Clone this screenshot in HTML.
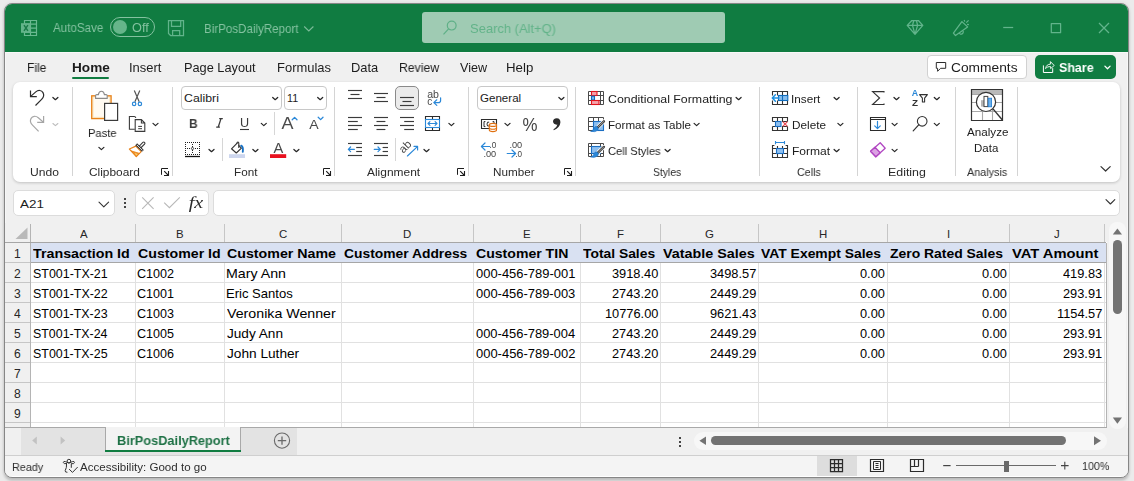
<!DOCTYPE html>
<html><head><meta charset="utf-8"><title>Excel</title>
<style>
html,body{margin:0;padding:0;}
body{width:1134px;height:481px;overflow:hidden;background:#ebebeb;position:relative;font-family:"Liberation Sans",sans-serif;}
.b{position:absolute;}
.t{position:absolute;white-space:nowrap;line-height:normal;transform-origin:0 0;}
.g{will-change:transform;}
svg{position:absolute;left:0;top:0;overflow:visible;}
</style></head><body>
<div class="b" style="left:4px;top:3px;width:1125px;height:475px;box-sizing:border-box;border:1px solid #868686;border-radius:8px;background:#f0f0f0;box-shadow:0 3px 3px 0 rgba(0,0,0,.17), 0 0 3px 1px rgba(0,0,0,.05);"></div>
<div class="b" style="left:5px;top:4px;width:1123px;height:48px;background:#107c41;border-radius:7px 7px 0 0;"></div>
<div class="b" style="left:422px;top:12px;width:303px;height:31px;background:#9fcbb3;border-radius:3px;"></div>
<div class="b" style="left:110px;top:17px;width:45px;height:20px;border:1px solid #84c2a0;box-sizing:border-box;border-radius:10px;"></div>
<div class="b" style="left:113px;top:20px;width:14px;height:14px;background:#66b58a;border-radius:7px;"></div>
<div class="b" style="left:5px;top:52px;width:1123px;height:1px;background:#f8f8f8;"></div>
<div class="b" style="left:5px;top:53px;width:1px;height:417px;background:#f7f7f7;"></div>
<div class="b" style="left:1127px;top:53px;width:1px;height:417px;background:#f7f7f7;"></div>
<div class="b" style="left:72px;top:77px;width:37px;height:2px;background:#107c41;border-radius:1px;"></div>
<div class="b" style="left:927px;top:55px;width:100px;height:24px;background:#ffffff;border:1px solid #d1d1d1;box-sizing:border-box;border-radius:4px;"></div>
<div class="b" style="left:1035px;top:55px;width:81px;height:24px;background:#107c41;border-radius:5px;"></div>
<div class="b" style="left:13px;top:82px;width:1107px;height:99.5px;background:#ffffff;border-radius:7px;box-shadow:0 1px 3px rgba(0,0,0,.2);"></div>
<div class="b" style="left:72px;top:87px;width:1px;height:89px;background:#d4d4d4;"></div>
<div class="b" style="left:172px;top:87px;width:1px;height:89px;background:#d4d4d4;"></div>
<div class="b" style="left:334px;top:87px;width:1px;height:89px;background:#d4d4d4;"></div>
<div class="b" style="left:468px;top:87px;width:1px;height:89px;background:#d4d4d4;"></div>
<div class="b" style="left:575px;top:87px;width:1px;height:89px;background:#d4d4d4;"></div>
<div class="b" style="left:759px;top:87px;width:1px;height:89px;background:#d4d4d4;"></div>
<div class="b" style="left:857px;top:87px;width:1px;height:89px;background:#d4d4d4;"></div>
<div class="b" style="left:955px;top:87px;width:1px;height:89px;background:#d4d4d4;"></div>
<div class="b" style="left:1017px;top:87px;width:1px;height:89px;background:#d4d4d4;"></div>
<div class="b" style="left:274px;top:112px;width:1px;height:23px;background:#d6d6d6;"></div>
<div class="b" style="left:222px;top:138px;width:1px;height:23px;background:#d6d6d6;"></div>
<div class="b" style="left:395px;top:138px;width:1px;height:23px;background:#d6d6d6;"></div>
<div class="b" style="left:181px;top:86px;width:101px;height:24px;background:#fff;border:1px solid #c8c8c8;box-sizing:border-box;border-radius:4px;"></div>
<div class="b" style="left:284px;top:86px;width:43px;height:24px;background:#fff;border:1px solid #c8c8c8;box-sizing:border-box;border-radius:4px;"></div>
<div class="b" style="left:477px;top:86px;width:91px;height:24px;background:#fff;border:1px solid #c8c8c8;box-sizing:border-box;border-radius:4px;"></div>
<div class="b" style="left:395px;top:86px;width:24px;height:24px;background:#ebebeb;border:1px solid #8a8a8a;box-sizing:border-box;border-radius:5px;"></div>
<div class="b" style="left:13px;top:190px;width:102px;height:26px;background:#fff;border:1px solid #dcdcdc;box-sizing:border-box;border-radius:5px;"></div>
<div class="b" style="left:135px;top:190px;width:74px;height:26px;background:#fff;border:1px solid #dcdcdc;box-sizing:border-box;border-radius:5px;"></div>
<div class="b" style="left:213px;top:190px;width:907px;height:26px;background:#fff;border:1px solid #dcdcdc;box-sizing:border-box;border-radius:5px;"></div>
<div class="b" style="left:124px;top:198px;width:2px;height:2px;background:#444;"></div>
<div class="b" style="left:124px;top:202px;width:2px;height:2px;background:#444;"></div>
<div class="b" style="left:124px;top:206px;width:2px;height:2px;background:#444;"></div>
<div class="b" style="left:5px;top:223px;width:1102px;height:204px;background:#ffffff;"></div>
<div class="b" style="left:5px;top:223px;width:1102px;height:19px;background:#f0f0f0;"></div>
<div class="b" style="left:5px;top:242px;width:25px;height:185px;background:#f0f0f0;"></div>
<div class="b" style="left:31px;top:243px;width:1075px;height:19px;background:#d9e1f2;"></div>
<div class="b" style="left:31px;top:262px;width:1075px;height:1px;background:#a6a6a6;"></div>
<div class="b" style="left:5px;top:262px;width:25px;height:1px;background:#c6c6c6;"></div>
<div class="b" style="left:31px;top:282px;width:1075px;height:1px;background:#e1e1e1;"></div>
<div class="b" style="left:5px;top:282px;width:25px;height:1px;background:#c6c6c6;"></div>
<div class="b" style="left:31px;top:302px;width:1075px;height:1px;background:#e1e1e1;"></div>
<div class="b" style="left:5px;top:302px;width:25px;height:1px;background:#c6c6c6;"></div>
<div class="b" style="left:31px;top:322px;width:1075px;height:1px;background:#e1e1e1;"></div>
<div class="b" style="left:5px;top:322px;width:25px;height:1px;background:#c6c6c6;"></div>
<div class="b" style="left:31px;top:342px;width:1075px;height:1px;background:#e1e1e1;"></div>
<div class="b" style="left:5px;top:342px;width:25px;height:1px;background:#c6c6c6;"></div>
<div class="b" style="left:31px;top:362px;width:1075px;height:1px;background:#e1e1e1;"></div>
<div class="b" style="left:5px;top:362px;width:25px;height:1px;background:#c6c6c6;"></div>
<div class="b" style="left:31px;top:382px;width:1075px;height:1px;background:#e1e1e1;"></div>
<div class="b" style="left:5px;top:382px;width:25px;height:1px;background:#c6c6c6;"></div>
<div class="b" style="left:31px;top:402px;width:1075px;height:1px;background:#e1e1e1;"></div>
<div class="b" style="left:5px;top:402px;width:25px;height:1px;background:#c6c6c6;"></div>
<div class="b" style="left:31px;top:422px;width:1075px;height:1px;background:#e1e1e1;"></div>
<div class="b" style="left:5px;top:422px;width:25px;height:1px;background:#c6c6c6;"></div>
<div class="b" style="left:135px;top:263px;width:1px;height:164px;background:#e1e1e1;"></div>
<div class="b" style="left:135px;top:224px;width:1px;height:18px;background:#c6c6c6;"></div>
<div class="b" style="left:224px;top:263px;width:1px;height:164px;background:#e1e1e1;"></div>
<div class="b" style="left:224px;top:224px;width:1px;height:18px;background:#c6c6c6;"></div>
<div class="b" style="left:341px;top:263px;width:1px;height:164px;background:#e1e1e1;"></div>
<div class="b" style="left:341px;top:224px;width:1px;height:18px;background:#c6c6c6;"></div>
<div class="b" style="left:473px;top:263px;width:1px;height:164px;background:#e1e1e1;"></div>
<div class="b" style="left:473px;top:224px;width:1px;height:18px;background:#c6c6c6;"></div>
<div class="b" style="left:580px;top:263px;width:1px;height:164px;background:#e1e1e1;"></div>
<div class="b" style="left:580px;top:224px;width:1px;height:18px;background:#c6c6c6;"></div>
<div class="b" style="left:660px;top:263px;width:1px;height:164px;background:#e1e1e1;"></div>
<div class="b" style="left:660px;top:224px;width:1px;height:18px;background:#c6c6c6;"></div>
<div class="b" style="left:758px;top:263px;width:1px;height:164px;background:#e1e1e1;"></div>
<div class="b" style="left:758px;top:224px;width:1px;height:18px;background:#c6c6c6;"></div>
<div class="b" style="left:887px;top:263px;width:1px;height:164px;background:#e1e1e1;"></div>
<div class="b" style="left:887px;top:224px;width:1px;height:18px;background:#c6c6c6;"></div>
<div class="b" style="left:1009px;top:263px;width:1px;height:164px;background:#e1e1e1;"></div>
<div class="b" style="left:1009px;top:224px;width:1px;height:18px;background:#c6c6c6;"></div>
<div class="b" style="left:1104px;top:263px;width:1px;height:164px;background:#e1e1e1;"></div>
<div class="b" style="left:1104px;top:224px;width:1px;height:18px;background:#c6c6c6;"></div>
<div class="b" style="left:1106px;top:243px;width:1px;height:184px;background:#b4b4b4;"></div>
<div class="b" style="left:30px;top:224px;width:1px;height:203px;background:#b4b4b4;"></div>
<div class="b" style="left:5px;top:242px;width:1101px;height:1px;background:#a6a6a6;"></div>
<svg width="1134" height="481"><path d="M27.5 227.5 L27.5 239 L15.5 239 Z" fill="#b9b9b9"/></svg>
<div class="b" style="left:5px;top:427px;width:1102px;height:1px;background:#a9a9a9;"></div>
<div class="b" style="left:5px;top:428px;width:1123px;height:27px;background:#f0f0f0;"></div>
<div class="b" style="left:1109px;top:222px;width:17px;height:207px;background:#f7f7f7;border-radius:8px;"></div>
<div class="b" style="left:1113px;top:240px;width:9px;height:74px;background:#737373;border-radius:4.5px;"></div>
<div class="b" style="left:21px;top:428px;width:276px;height:27px;background:#e3e3e3;"></div>
<div class="b" style="left:105px;top:427px;width:136px;height:25px;background:#f3f3f3;border-left:1px solid #a9a9a9;border-right:1px solid #a9a9a9;box-sizing:border-box;"></div>
<div class="b" style="left:105px;top:450px;width:136px;height:2px;background:#107c41;"></div>
<div class="b" style="left:5px;top:455px;width:1123px;height:1px;background:#cfcfcf;"></div>
<div class="b" style="left:694px;top:432px;width:413px;height:18px;background:#f7f7f7;border-radius:9px;"></div>
<div class="b" style="left:711px;top:436px;width:355px;height:9px;background:#737373;border-radius:4.5px;"></div>
<div class="b" style="left:679px;top:437px;width:2px;height:2px;background:#444;"></div>
<div class="b" style="left:679px;top:441px;width:2px;height:2px;background:#444;"></div>
<div class="b" style="left:679px;top:445px;width:2px;height:2px;background:#444;"></div>
<div class="b" style="left:5px;top:456px;width:1123px;height:21px;background:#f4f4f4;border-radius:0 0 7px 7px;"></div>
<div class="b" style="left:12px;top:476px;width:1109px;height:1px;background:#ffffff;"></div>
<div class="b" style="left:817px;top:456px;width:40px;height:20px;background:#dddddd;"></div>
<div class="b" style="left:956px;top:465px;width:100px;height:1px;background:#6a6a6a;"></div>
<div class="b" style="left:1004px;top:461px;width:5px;height:11px;background:#6a6a6a;"></div>
<span class="t g" style="left:53.20px;top:21.00px;font-size:12.5px;color:#84c2a0;font-weight:normal;font-style:normal;font-family:'Liberation Sans',sans-serif;transform:scaleX(0.9287);">AutoSave</span>
<span class="t g" style="left:131.73px;top:21.00px;font-size:12px;color:#84c2a0;font-weight:normal;font-style:normal;font-family:'Liberation Sans',sans-serif;transform:scaleX(1.0588);">Off</span>
<span class="t g" style="left:204.47px;top:21.00px;font-size:13px;color:#84c2a0;font-weight:normal;font-style:normal;font-family:'Liberation Sans',sans-serif;transform:scaleX(0.8901);">BirPosDailyReport</span>
<span class="t g" style="left:470.42px;top:21.00px;font-size:13px;color:#62b389;font-weight:normal;font-style:normal;font-family:'Liberation Sans',sans-serif;transform:scaleX(0.9946);">Search (Alt+Q)</span>
<span class="t g" style="left:26.74px;top:61.00px;font-size:12.6px;color:#1c1c1c;font-weight:normal;font-style:normal;font-family:'Liberation Sans',sans-serif;transform:scaleX(0.9567);">File</span>
<span class="t g" style="left:128.83px;top:61.00px;font-size:12.6px;color:#1c1c1c;font-weight:normal;font-style:normal;font-family:'Liberation Sans',sans-serif;transform:scaleX(1.0296);">Insert</span>
<span class="t g" style="left:183.78px;top:61.00px;font-size:12.6px;color:#1c1c1c;font-weight:normal;font-style:normal;font-family:'Liberation Sans',sans-serif;transform:scaleX(1.0132);">Page Layout</span>
<span class="t g" style="left:276.56px;top:61.00px;font-size:12.6px;color:#1c1c1c;font-weight:normal;font-style:normal;font-family:'Liberation Sans',sans-serif;transform:scaleX(1.0295);">Formulas</span>
<span class="t g" style="left:350.77px;top:61.00px;font-size:12.6px;color:#1c1c1c;font-weight:normal;font-style:normal;font-family:'Liberation Sans',sans-serif;transform:scaleX(1.0243);">Data</span>
<span class="t g" style="left:399.12px;top:61.00px;font-size:12.6px;color:#1c1c1c;font-weight:normal;font-style:normal;font-family:'Liberation Sans',sans-serif;transform:scaleX(0.9722);">Review</span>
<span class="t g" style="left:459.54px;top:61.00px;font-size:12.6px;color:#1c1c1c;font-weight:normal;font-style:normal;font-family:'Liberation Sans',sans-serif;transform:scaleX(0.9990);">View</span>
<span class="t g" style="left:505.84px;top:61.00px;font-size:12.6px;color:#1c1c1c;font-weight:normal;font-style:normal;font-family:'Liberation Sans',sans-serif;transform:scaleX(1.0541);">Help</span>
<span class="t g" style="left:71.52px;top:61.00px;font-size:12.6px;color:#1c1c1c;font-weight:bold;font-style:normal;font-family:'Liberation Sans',sans-serif;transform:scaleX(1.0800);">Home</span>
<span class="t g" style="left:950.71px;top:61.00px;font-size:12.6px;color:#1c1c1c;font-weight:normal;font-style:normal;font-family:'Liberation Sans',sans-serif;transform:scaleX(1.0927);">Comments</span>
<span class="t g" style="left:1058.73px;top:60.00px;font-size:13px;color:#ffffff;font-weight:bold;font-style:normal;font-family:'Liberation Sans',sans-serif;transform:scaleX(0.9576);">Share</span>
<span class="t g" style="left:29.59px;top:166.00px;font-size:11.5px;color:#2b2b2b;font-weight:normal;font-style:normal;font-family:'Liberation Sans',sans-serif;transform:scaleX(1.0511);">Undo</span>
<span class="t g" style="left:88.91px;top:166.00px;font-size:11.5px;color:#2b2b2b;font-weight:normal;font-style:normal;font-family:'Liberation Sans',sans-serif;transform:scaleX(1.0335);">Clipboard</span>
<span class="t g" style="left:233.66px;top:166.00px;font-size:11.5px;color:#2b2b2b;font-weight:normal;font-style:normal;font-family:'Liberation Sans',sans-serif;transform:scaleX(1.0171);">Font</span>
<span class="t g" style="left:367.00px;top:166.00px;font-size:11.5px;color:#2b2b2b;font-weight:normal;font-style:normal;font-family:'Liberation Sans',sans-serif;transform:scaleX(1.0380);">Alignment</span>
<span class="t g" style="left:493.06px;top:166.00px;font-size:11.5px;color:#2b2b2b;font-weight:normal;font-style:normal;font-family:'Liberation Sans',sans-serif;transform:scaleX(1.0178);">Number</span>
<span class="t g" style="left:653.03px;top:166.00px;font-size:11.5px;color:#2b2b2b;font-weight:normal;font-style:normal;font-family:'Liberation Sans',sans-serif;transform:scaleX(0.9041);">Styles</span>
<span class="t g" style="left:796.86px;top:166.00px;font-size:11.5px;color:#2b2b2b;font-weight:normal;font-style:normal;font-family:'Liberation Sans',sans-serif;transform:scaleX(0.9305);">Cells</span>
<span class="t g" style="left:887.61px;top:166.00px;font-size:11.5px;color:#2b2b2b;font-weight:normal;font-style:normal;font-family:'Liberation Sans',sans-serif;transform:scaleX(1.0758);">Editing</span>
<span class="t g" style="left:966.50px;top:166.00px;font-size:11.5px;color:#2b2b2b;font-weight:normal;font-style:normal;font-family:'Liberation Sans',sans-serif;transform:scaleX(0.9403);">Analysis</span>
<span class="t g" style="left:88.30px;top:126.00px;font-size:11.8px;color:#1c1c1c;font-weight:normal;font-style:normal;font-family:'Liberation Sans',sans-serif;transform:scaleX(0.9486);">Paste</span>
<span class="t" style="left:183.78px;top:92.00px;font-size:11.5px;color:#1c1c1c;font-weight:normal;font-style:normal;font-family:'Liberation Sans',sans-serif;transform:scaleX(1.0697);">Calibri</span>
<span class="t" style="left:287.40px;top:92.00px;font-size:11.5px;color:#1c1c1c;font-weight:normal;font-style:normal;font-family:'Liberation Sans',sans-serif;transform:scaleX(0.9313);">11</span>
<span class="t" style="left:480.02px;top:92.00px;font-size:11.5px;color:#1c1c1c;font-weight:normal;font-style:normal;font-family:'Liberation Sans',sans-serif;transform:scaleX(1.0061);">General</span>
<span class="t g" style="left:607.88px;top:93.00px;font-size:11.5px;color:#1c1c1c;font-weight:normal;font-style:normal;font-family:'Liberation Sans',sans-serif;transform:scaleX(1.0755);">Conditional Formatting</span>
<span class="t g" style="left:607.57px;top:119.00px;font-size:11.5px;color:#1c1c1c;font-weight:normal;font-style:normal;font-family:'Liberation Sans',sans-serif;transform:scaleX(1.0088);">Format as Table</span>
<span class="t g" style="left:607.94px;top:145.00px;font-size:11.5px;color:#1c1c1c;font-weight:normal;font-style:normal;font-family:'Liberation Sans',sans-serif;transform:scaleX(0.9689);">Cell Styles</span>
<span class="t g" style="left:791.44px;top:93.00px;font-size:11.5px;color:#1c1c1c;font-weight:normal;font-style:normal;font-family:'Liberation Sans',sans-serif;transform:scaleX(1.0196);">Insert</span>
<span class="t g" style="left:791.56px;top:119.00px;font-size:11.5px;color:#1c1c1c;font-weight:normal;font-style:normal;font-family:'Liberation Sans',sans-serif;transform:scaleX(1.0221);">Delete</span>
<span class="t g" style="left:791.54px;top:145.00px;font-size:11.5px;color:#1c1c1c;font-weight:normal;font-style:normal;font-family:'Liberation Sans',sans-serif;transform:scaleX(1.0474);">Format</span>
<span class="t g" style="left:966.50px;top:126.00px;font-size:11.5px;color:#1c1c1c;font-weight:normal;font-style:normal;font-family:'Liberation Sans',sans-serif;transform:scaleX(1.0133);">Analyze</span>
<span class="t g" style="left:974.48px;top:142.00px;font-size:11.5px;color:#1c1c1c;font-weight:normal;font-style:normal;font-family:'Liberation Sans',sans-serif;transform:scaleX(0.9981);">Data</span>
<span class="t" style="left:19.80px;top:198.00px;font-size:11.5px;color:#1c1c1c;font-weight:normal;font-style:normal;font-family:'Liberation Sans',sans-serif;transform:scaleX(1.1678);">A21</span>
<span class="t g" style="left:188.92px;top:116.00px;font-size:13px;color:#3b3b3b;font-weight:bold;font-style:normal;font-family:'Liberation Sans',sans-serif;transform:scaleX(0.9206);">B</span>
<span class="t g" style="left:239.95px;top:116.40px;font-size:12.4px;color:#3b3b3b;font-weight:normal;font-style:normal;font-family:'Liberation Sans',sans-serif;transform:scaleX(1.0187);">U</span>
<span class="t" style="left:79.69px;top:227.00px;font-size:11.8px;color:#262626;font-weight:normal;font-style:normal;font-family:'Liberation Sans',sans-serif;transform:scaleX(0.9700);">A</span>
<span class="t" style="left:176.02px;top:227.00px;font-size:11.8px;color:#262626;font-weight:normal;font-style:normal;font-family:'Liberation Sans',sans-serif;transform:scaleX(0.9700);">B</span>
<span class="t" style="left:278.79px;top:227.00px;font-size:11.8px;color:#262626;font-weight:normal;font-style:normal;font-family:'Liberation Sans',sans-serif;transform:scaleX(0.9700);">C</span>
<span class="t" style="left:403.18px;top:227.00px;font-size:11.8px;color:#262626;font-weight:normal;font-style:normal;font-family:'Liberation Sans',sans-serif;transform:scaleX(0.9700);">D</span>
<span class="t" style="left:522.97px;top:227.00px;font-size:11.8px;color:#262626;font-weight:normal;font-style:normal;font-family:'Liberation Sans',sans-serif;transform:scaleX(0.9700);">E</span>
<span class="t" style="left:616.78px;top:227.00px;font-size:11.8px;color:#262626;font-weight:normal;font-style:normal;font-family:'Liberation Sans',sans-serif;transform:scaleX(0.9700);">F</span>
<span class="t" style="left:705.18px;top:227.00px;font-size:11.8px;color:#262626;font-weight:normal;font-style:normal;font-family:'Liberation Sans',sans-serif;transform:scaleX(0.9700);">G</span>
<span class="t" style="left:818.88px;top:227.00px;font-size:11.8px;color:#262626;font-weight:normal;font-style:normal;font-family:'Liberation Sans',sans-serif;transform:scaleX(0.9700);">H</span>
<span class="t" style="left:946.93px;top:227.00px;font-size:11.8px;color:#262626;font-weight:normal;font-style:normal;font-family:'Liberation Sans',sans-serif;transform:scaleX(0.9700);">I</span>
<span class="t" style="left:1054.48px;top:227.00px;font-size:11.8px;color:#262626;font-weight:normal;font-style:normal;font-family:'Liberation Sans',sans-serif;transform:scaleX(0.9700);">J</span>
<span class="t" style="left:14.16px;top:246.00px;font-size:13px;color:#262626;font-weight:normal;font-style:normal;font-family:'Liberation Sans',sans-serif;transform:scaleX(0.9300);">1</span>
<span class="t" style="left:14.35px;top:266.00px;font-size:13px;color:#262626;font-weight:normal;font-style:normal;font-family:'Liberation Sans',sans-serif;transform:scaleX(0.9300);">2</span>
<span class="t" style="left:14.35px;top:286.00px;font-size:13px;color:#262626;font-weight:normal;font-style:normal;font-family:'Liberation Sans',sans-serif;transform:scaleX(0.9300);">3</span>
<span class="t" style="left:14.41px;top:306.00px;font-size:13px;color:#262626;font-weight:normal;font-style:normal;font-family:'Liberation Sans',sans-serif;transform:scaleX(0.9300);">4</span>
<span class="t" style="left:14.35px;top:326.00px;font-size:13px;color:#262626;font-weight:normal;font-style:normal;font-family:'Liberation Sans',sans-serif;transform:scaleX(0.9300);">5</span>
<span class="t" style="left:14.28px;top:346.00px;font-size:13px;color:#262626;font-weight:normal;font-style:normal;font-family:'Liberation Sans',sans-serif;transform:scaleX(0.9300);">6</span>
<span class="t" style="left:14.35px;top:366.00px;font-size:13px;color:#262626;font-weight:normal;font-style:normal;font-family:'Liberation Sans',sans-serif;transform:scaleX(0.9300);">7</span>
<span class="t" style="left:14.31px;top:386.00px;font-size:13px;color:#262626;font-weight:normal;font-style:normal;font-family:'Liberation Sans',sans-serif;transform:scaleX(0.9300);">8</span>
<span class="t" style="left:14.35px;top:406.00px;font-size:13px;color:#262626;font-weight:normal;font-style:normal;font-family:'Liberation Sans',sans-serif;transform:scaleX(0.9300);">9</span>
<span class="t" style="left:32.96px;top:246.00px;font-size:13px;color:#000;font-weight:bold;font-style:normal;font-family:'Liberation Sans',sans-serif;transform:scaleX(1.0979);">Transaction Id</span>
<span class="t" style="left:137.53px;top:246.00px;font-size:13px;color:#000;font-weight:bold;font-style:normal;font-family:'Liberation Sans',sans-serif;transform:scaleX(1.0901);">Customer Id</span>
<span class="t" style="left:226.83px;top:246.00px;font-size:13px;color:#000;font-weight:bold;font-style:normal;font-family:'Liberation Sans',sans-serif;transform:scaleX(1.0928);">Customer Name</span>
<span class="t" style="left:343.65px;top:246.00px;font-size:13px;color:#000;font-weight:bold;font-style:normal;font-family:'Liberation Sans',sans-serif;transform:scaleX(1.0646);">Customer Address</span>
<span class="t" style="left:475.64px;top:246.00px;font-size:13px;color:#000;font-weight:bold;font-style:normal;font-family:'Liberation Sans',sans-serif;transform:scaleX(1.0829);">Customer TIN</span>
<span class="t" style="left:583.46px;top:246.00px;font-size:13px;color:#000;font-weight:bold;font-style:normal;font-family:'Liberation Sans',sans-serif;transform:scaleX(1.0654);">Total Sales</span>
<span class="t" style="left:662.93px;top:246.00px;font-size:13px;color:#000;font-weight:bold;font-style:normal;font-family:'Liberation Sans',sans-serif;transform:scaleX(1.1032);">Vatable Sales</span>
<span class="t" style="left:761.13px;top:246.00px;font-size:13px;color:#000;font-weight:bold;font-style:normal;font-family:'Liberation Sans',sans-serif;transform:scaleX(1.0698);">VAT Exempt Sales</span>
<span class="t" style="left:889.58px;top:246.00px;font-size:13px;color:#000;font-weight:bold;font-style:normal;font-family:'Liberation Sans',sans-serif;transform:scaleX(1.0709);">Zero Rated Sales</span>
<span class="t" style="left:1012.33px;top:246.00px;font-size:13px;color:#000;font-weight:bold;font-style:normal;font-family:'Liberation Sans',sans-serif;transform:scaleX(1.1335);">VAT Amount</span>
<span class="t" style="left:32.54px;top:266.00px;font-size:13px;color:#000;font-weight:normal;font-style:normal;font-family:'Liberation Sans',sans-serif;transform:scaleX(0.9567);">ST001-TX-21</span>
<span class="t" style="left:137.47px;top:266.00px;font-size:13px;color:#000;font-weight:normal;font-style:normal;font-family:'Liberation Sans',sans-serif;transform:scaleX(0.9680);">C1002</span>
<span class="t" style="left:226.26px;top:266.00px;font-size:13px;color:#000;font-weight:normal;font-style:normal;font-family:'Liberation Sans',sans-serif;transform:scaleX(1.0916);">Mary Ann</span>
<span class="t" style="left:475.88px;top:266.00px;font-size:13px;color:#000;font-weight:normal;font-style:normal;font-family:'Liberation Sans',sans-serif;transform:scaleX(0.9959);">000-456-789-001</span>
<span class="t" style="left:611.89px;top:266.00px;font-size:13px;color:#000;font-weight:normal;font-style:normal;font-family:'Liberation Sans',sans-serif;transform:scaleX(0.9844);">3918.40</span>
<span class="t" style="left:710.08px;top:266.00px;font-size:13px;color:#000;font-weight:normal;font-style:normal;font-family:'Liberation Sans',sans-serif;transform:scaleX(0.9844);">3498.57</span>
<span class="t" style="left:860.26px;top:266.00px;font-size:13px;color:#000;font-weight:normal;font-style:normal;font-family:'Liberation Sans',sans-serif;transform:scaleX(0.9844);">0.00</span>
<span class="t" style="left:982.26px;top:266.00px;font-size:13px;color:#000;font-weight:normal;font-style:normal;font-family:'Liberation Sans',sans-serif;transform:scaleX(0.9844);">0.00</span>
<span class="t" style="left:1062.65px;top:266.00px;font-size:13px;color:#000;font-weight:normal;font-style:normal;font-family:'Liberation Sans',sans-serif;transform:scaleX(0.9844);">419.83</span>
<span class="t" style="left:32.54px;top:286.00px;font-size:13px;color:#000;font-weight:normal;font-style:normal;font-family:'Liberation Sans',sans-serif;transform:scaleX(0.9575);">ST001-TX-22</span>
<span class="t" style="left:137.47px;top:286.00px;font-size:13px;color:#000;font-weight:normal;font-style:normal;font-family:'Liberation Sans',sans-serif;transform:scaleX(0.9663);">C1001</span>
<span class="t" style="left:226.36px;top:286.00px;font-size:13px;color:#000;font-weight:normal;font-style:normal;font-family:'Liberation Sans',sans-serif;transform:scaleX(1.0046);">Eric Santos</span>
<span class="t" style="left:475.88px;top:286.00px;font-size:13px;color:#000;font-weight:normal;font-style:normal;font-family:'Liberation Sans',sans-serif;transform:scaleX(0.9952);">000-456-789-003</span>
<span class="t" style="left:611.89px;top:286.00px;font-size:13px;color:#000;font-weight:normal;font-style:normal;font-family:'Liberation Sans',sans-serif;transform:scaleX(0.9844);">2743.20</span>
<span class="t" style="left:710.02px;top:286.00px;font-size:13px;color:#000;font-weight:normal;font-style:normal;font-family:'Liberation Sans',sans-serif;transform:scaleX(0.9844);">2449.29</span>
<span class="t" style="left:860.26px;top:286.00px;font-size:13px;color:#000;font-weight:normal;font-style:normal;font-family:'Liberation Sans',sans-serif;transform:scaleX(0.9844);">0.00</span>
<span class="t" style="left:982.26px;top:286.00px;font-size:13px;color:#000;font-weight:normal;font-style:normal;font-family:'Liberation Sans',sans-serif;transform:scaleX(0.9844);">0.00</span>
<span class="t" style="left:1062.72px;top:286.00px;font-size:13px;color:#000;font-weight:normal;font-style:normal;font-family:'Liberation Sans',sans-serif;transform:scaleX(0.9844);">293.91</span>
<span class="t" style="left:32.54px;top:306.00px;font-size:13px;color:#000;font-weight:normal;font-style:normal;font-family:'Liberation Sans',sans-serif;transform:scaleX(0.9558);">ST001-TX-23</span>
<span class="t" style="left:137.47px;top:306.00px;font-size:13px;color:#000;font-weight:normal;font-style:normal;font-family:'Liberation Sans',sans-serif;transform:scaleX(0.9646);">C1003</span>
<span class="t" style="left:227.33px;top:306.00px;font-size:13px;color:#000;font-weight:normal;font-style:normal;font-family:'Liberation Sans',sans-serif;transform:scaleX(1.0929);">Veronika Wenner</span>
<span class="t" style="left:604.79px;top:306.00px;font-size:13px;color:#000;font-weight:normal;font-style:normal;font-family:'Liberation Sans',sans-serif;transform:scaleX(0.9844);">10776.00</span>
<span class="t" style="left:709.95px;top:306.00px;font-size:13px;color:#000;font-weight:normal;font-style:normal;font-family:'Liberation Sans',sans-serif;transform:scaleX(0.9844);">9621.43</span>
<span class="t" style="left:860.26px;top:306.00px;font-size:13px;color:#000;font-weight:normal;font-style:normal;font-family:'Liberation Sans',sans-serif;transform:scaleX(0.9844);">0.00</span>
<span class="t" style="left:982.26px;top:306.00px;font-size:13px;color:#000;font-weight:normal;font-style:normal;font-family:'Liberation Sans',sans-serif;transform:scaleX(0.9844);">0.00</span>
<span class="t" style="left:1056.64px;top:306.00px;font-size:13px;color:#000;font-weight:normal;font-style:normal;font-family:'Liberation Sans',sans-serif;transform:scaleX(0.9844);">1154.57</span>
<span class="t" style="left:32.54px;top:326.00px;font-size:13px;color:#000;font-weight:normal;font-style:normal;font-family:'Liberation Sans',sans-serif;transform:scaleX(0.9542);">ST001-TX-24</span>
<span class="t" style="left:137.47px;top:326.00px;font-size:13px;color:#000;font-weight:normal;font-style:normal;font-family:'Liberation Sans',sans-serif;transform:scaleX(0.9646);">C1005</span>
<span class="t" style="left:227.20px;top:326.00px;font-size:13px;color:#000;font-weight:normal;font-style:normal;font-family:'Liberation Sans',sans-serif;transform:scaleX(1.0466);">Judy Ann</span>
<span class="t" style="left:475.88px;top:326.00px;font-size:13px;color:#000;font-weight:normal;font-style:normal;font-family:'Liberation Sans',sans-serif;transform:scaleX(0.9939);">000-456-789-004</span>
<span class="t" style="left:611.89px;top:326.00px;font-size:13px;color:#000;font-weight:normal;font-style:normal;font-family:'Liberation Sans',sans-serif;transform:scaleX(0.9844);">2743.20</span>
<span class="t" style="left:710.02px;top:326.00px;font-size:13px;color:#000;font-weight:normal;font-style:normal;font-family:'Liberation Sans',sans-serif;transform:scaleX(0.9844);">2449.29</span>
<span class="t" style="left:860.26px;top:326.00px;font-size:13px;color:#000;font-weight:normal;font-style:normal;font-family:'Liberation Sans',sans-serif;transform:scaleX(0.9844);">0.00</span>
<span class="t" style="left:982.26px;top:326.00px;font-size:13px;color:#000;font-weight:normal;font-style:normal;font-family:'Liberation Sans',sans-serif;transform:scaleX(0.9844);">0.00</span>
<span class="t" style="left:1062.72px;top:326.00px;font-size:13px;color:#000;font-weight:normal;font-style:normal;font-family:'Liberation Sans',sans-serif;transform:scaleX(0.9844);">293.91</span>
<span class="t" style="left:32.54px;top:346.00px;font-size:13px;color:#000;font-weight:normal;font-style:normal;font-family:'Liberation Sans',sans-serif;transform:scaleX(0.9558);">ST001-TX-25</span>
<span class="t" style="left:137.47px;top:346.00px;font-size:13px;color:#000;font-weight:normal;font-style:normal;font-family:'Liberation Sans',sans-serif;transform:scaleX(0.9646);">C1006</span>
<span class="t" style="left:227.20px;top:346.00px;font-size:13px;color:#000;font-weight:normal;font-style:normal;font-family:'Liberation Sans',sans-serif;transform:scaleX(1.0505);">John Luther</span>
<span class="t" style="left:475.88px;top:346.00px;font-size:13px;color:#000;font-weight:normal;font-style:normal;font-family:'Liberation Sans',sans-serif;transform:scaleX(0.9965);">000-456-789-002</span>
<span class="t" style="left:611.89px;top:346.00px;font-size:13px;color:#000;font-weight:normal;font-style:normal;font-family:'Liberation Sans',sans-serif;transform:scaleX(0.9844);">2743.20</span>
<span class="t" style="left:710.02px;top:346.00px;font-size:13px;color:#000;font-weight:normal;font-style:normal;font-family:'Liberation Sans',sans-serif;transform:scaleX(0.9844);">2449.29</span>
<span class="t" style="left:860.26px;top:346.00px;font-size:13px;color:#000;font-weight:normal;font-style:normal;font-family:'Liberation Sans',sans-serif;transform:scaleX(0.9844);">0.00</span>
<span class="t" style="left:982.26px;top:346.00px;font-size:13px;color:#000;font-weight:normal;font-style:normal;font-family:'Liberation Sans',sans-serif;transform:scaleX(0.9844);">0.00</span>
<span class="t" style="left:1062.72px;top:346.00px;font-size:13px;color:#000;font-weight:normal;font-style:normal;font-family:'Liberation Sans',sans-serif;transform:scaleX(0.9844);">293.91</span>
<span class="t g" style="left:116.57px;top:433.00px;font-size:13px;color:#1e7145;font-weight:bold;font-style:normal;font-family:'Liberation Sans',sans-serif;transform:scaleX(0.9826);">BirPosDailyReport</span>
<span class="t g" style="left:11.53px;top:461.00px;font-size:11.5px;color:#2e2e2e;font-weight:normal;font-style:normal;font-family:'Liberation Sans',sans-serif;transform:scaleX(0.9407);">Ready</span>
<span class="t g" style="left:80.40px;top:461.00px;font-size:11.5px;color:#2e2e2e;font-weight:normal;font-style:normal;font-family:'Liberation Sans',sans-serif;transform:scaleX(1.0059);">Accessibility: Good to go</span>
<span class="t g" style="left:1081.80px;top:460.00px;font-size:11.5px;color:#2e2e2e;font-weight:normal;font-style:normal;font-family:'Liberation Sans',sans-serif;transform:scaleX(0.9299);">100%</span>
<svg width="1134" height="481" viewBox="0 0 1134 481" fill="none" style="will-change:transform"><path d="M24.5 20.5 H36.5 V35.5 H24.5 Z M30.5 20.5 V35.5 M24.5 24.2 H36.5 M30.5 28.2 H36.5 M24.5 32.3 H36.5" stroke="#6ab991" stroke-width="1.2" fill="none" /><rect x="21" y="23.2" width="9.6" height="9.6" fill="#63b48a"/><path d="M24 25.2 L27.9 30.9 M27.9 25.2 L24 30.9" stroke="#1a7a48" stroke-width="1.5" fill="none" /><path d="M168.5 20.5 H183.5 V35.5 H170.6 L168.5 33.4 Z M171.5 20.5 V26.3 H180.7 V20.5 M172.6 35.5 V30.6 H179.7 V35.5" stroke="#62b48b" stroke-width="1.25" fill="none" /><path d="M304.2 26.5 L308.8 31 L313.4 26.5" stroke="#7bbb98" stroke-width="1.1" fill="none" /><circle cx="451.7" cy="25.6" r="4.4" stroke="#5fb087" stroke-width="1.2"/><path d="M448.6 28.8 L443.5 34.3" stroke="#5fb087" stroke-width="1.2" fill="none" /><path d="M907.2 25.4 L911.9 20.5 H918.4 L922.8 25.4 L915 34.4 Z M907.2 25.4 H922.8 M913.8 20.5 L912.5 25.4 L915 34.4 M916.4 20.5 L917.6 25.4 L915 34.4" stroke="#62b48b" stroke-width="1.25" fill="none" stroke-linejoin="round"/><path d="M961.9 21.6 L967.6 26.9 L955.5 35.5 L953.4 33.2 Z" stroke="#62b48b" stroke-width="1.25" fill="none" stroke-linejoin="round"/><path d="M959.2 33 A2 2 0 0 0 963 31" stroke="#62b48b" stroke-width="1.25" fill="none" /><path d="M964.2 20 L964.7 21.6 M966.3 22.6 L968.6 20.4 M967.1 24.3 L968.9 24.7" stroke="#62b48b" stroke-width="1.25" fill="none" /><path d="M1003.2 27.5 H1013.2" stroke="#62b48b" stroke-width="1.25" fill="none" /><path d="M1051.3 23.5 H1060.6 V32.7 H1051.3 Z" stroke="#62b48b" stroke-width="1.25" fill="none" stroke-linejoin="round"/><path d="M1099 23 L1109 33 M1109 23 L1099 33" stroke="#62b48b" stroke-width="1.25" fill="none" /><path d="M936.3 62.5 H945.7 V68.3 H940.6 L937.6 71.3 V68.3 H936.3 Z" stroke="#2b2b2b" stroke-width="1" fill="none" stroke-linejoin="round"/><path d="M1043.4 65.4 V72.5 H1052.7 V68.2" stroke="#fff" stroke-width="1" fill="none" /><path d="M1045.6 68.6 C1046 65.5 1048 64.2 1050.4 64.2 V61.6 L1054.2 65.5 L1050.6 68.6 V66.6 C1048.5 66.5 1046.8 67 1045.6 68.6 Z" stroke="#fff" stroke-width="0.9" fill="none" stroke-linejoin="round"/><path d="M1104.90 66.10 L1107.50 68.70 L1110.10 66.10" stroke="#fff" stroke-width="1.3" fill="none" stroke-linecap="round" stroke-linejoin="round"/><path d="M30.5 90.4 V96.6 H36.8" stroke="#2b2b2b" stroke-width="1.2" fill="none" /><path d="M30.7 96.4 L35.8 91.9 C38.3 89.7 41.6 90.1 43 92.6 C44.3 95 43.6 97.4 41.6 99.4 L35.5 105.5" stroke="#2b2b2b" stroke-width="1.2" fill="none" /><path d="M52.90 97.50 L55.40 99.70 L57.90 97.50" stroke="#262626" stroke-width="1.25" fill="none" stroke-linecap="round" stroke-linejoin="round"/><path d="M43.6 116.1 V122.4 H37.2" stroke="#a6a6a6" stroke-width="1.2" fill="none" /><path d="M43.4 122.2 L38.3 117.7 C35.8 115.5 32.5 115.9 31.1 118.4 C29.8 120.8 30.5 123.2 32.5 125.2 L38.6 131.4" stroke="#a6a6a6" stroke-width="1.2" fill="none" /><path d="M52.90 123.50 L55.40 125.70 L57.90 123.50" stroke="#bdbdbd" stroke-width="1.1" fill="none" stroke-linecap="round" stroke-linejoin="round"/><rect x="91.7" y="95.8" width="19.4" height="22.8" fill="#fbe6c2" stroke="#e8821a" stroke-width="1.3"/><rect x="93.6" y="97.6" width="15.6" height="19.2" fill="#fffaf1"/><path d="M95.6 98.4 V95.6 Q95.6 94.6 96.8 94.6 H98.4 Q98.8 91.3 101.4 91.3 Q104 91.3 104.4 94.6 H106 Q107.2 94.6 107.2 95.6 V98.4 Z" stroke="#8a8a8a" stroke-width="1.1" fill="#ffffff" /><rect x="104.6" y="103.4" width="13" height="17" fill="#fff" stroke="#3b3b3b" stroke-width="1.2"/><path d="M98.90 147.40 L101.40 149.60 L103.90 147.40" stroke="#262626" stroke-width="1.25" fill="none" stroke-linecap="round" stroke-linejoin="round"/><path d="M134.3 90.4 L139.2 101.8 M139.8 90.4 L134.9 101.8" stroke="#555" stroke-width="1.2" fill="none" /><circle cx="134.1" cy="103.9" r="1.7" stroke="#2b88d8" stroke-width="1.2"/><circle cx="139.9" cy="103.9" r="1.7" stroke="#2b88d8" stroke-width="1.2"/><path d="M134.8 129.3 H129.4 V116.5 H134.2 Q135.6 116.5 135.8 118" stroke="#3b3b3b" stroke-width="1.1" fill="none" /><path d="M135.2 119.6 H141.4 L144.8 123 V131.4 H135.2 Z M141.4 119.6 V123 H144.8" stroke="#3b3b3b" stroke-width="1.1" fill="#fff" /><path d="M138.2 126.4 H142 M138.2 128.7 H142" stroke="#3b3b3b" stroke-width="1" fill="none" /><path d="M153.00 123.40 L155.50 125.60 L158.00 123.40" stroke="#262626" stroke-width="1.25" fill="none" stroke-linecap="round" stroke-linejoin="round"/><path d="M129.4 149 L135.8 146.1 L141.2 151.6 L136.3 156.6 Z" stroke="#e8821a" stroke-width="1.2" fill="#fff" stroke-linejoin="round"/><path d="M131.6 151 L139.2 153.3 L136.3 156.3 Z" stroke="#e8821a" stroke-width="0.8" fill="#ee962a" stroke-linejoin="round"/><path d="M134.6 153 L137.6 154 L136.3 155.4 Z" stroke="none" stroke-width="0" fill="#f9d071" /><path d="M140.6 146.4 L143.7 143.3" stroke="#3b3b3b" stroke-width="3.5" fill="none" stroke-linecap="round"/><path d="M140.6 146.4 L143.7 143.3" stroke="#fff" stroke-width="1.3" fill="none" stroke-linecap="round"/><path d="M136.2 144.2 L142.9 150.9" stroke="#3b3b3b" stroke-width="2.7" fill="none" /><path d="M136.9 144.9 L142.4 150.4" stroke="#fff" stroke-width="0.8" fill="none" /><path d="M161.5 174.8 V168.5 H168" stroke="#1c1c1c" stroke-width="1" fill="none" /><path d="M164.2 171.2 L168.5 175.5 M168.5 171 V175.5 H164" stroke="#1c1c1c" stroke-width="1.1" fill="none" /><path d="M272.70 97.50 L275.20 99.70 L277.70 97.50" stroke="#262626" stroke-width="1.25" fill="none" stroke-linecap="round" stroke-linejoin="round"/><path d="M317.70 97.50 L320.20 99.70 L322.70 97.50" stroke="#262626" stroke-width="1.25" fill="none" stroke-linecap="round" stroke-linejoin="round"/><path d="M221 118.6 L218.2 127.3 M219.2 118.7 H222.8 M216.2 127.2 H219.9" stroke="#3b3b3b" stroke-width="1.3" fill="none" /><path d="M240 129.5 H249" stroke="#3b3b3b" stroke-width="1.1" fill="none" /><path d="M261.30 123.40 L263.80 125.60 L266.30 123.40" stroke="#262626" stroke-width="1.25" fill="none" stroke-linecap="round" stroke-linejoin="round"/><text x="281.4" y="128.6" font-family="Liberation Sans" font-size="17.4" fill="#4a4a4a" textLength="12" lengthAdjust="spacingAndGlyphs">A</text><path d="M292.2 119.8 L294.6 117.4 L297 119.8" stroke="#2b88d8" stroke-width="1.3" fill="none" stroke-linecap="round" stroke-linejoin="round"/><text x="309.2" y="128.6" font-family="Liberation Sans" font-size="13.2" fill="#4a4a4a" textLength="9.4" lengthAdjust="spacingAndGlyphs">A</text><path d="M318.2 117.2 L320.6 119.6 L323 117.2" stroke="#2b88d8" stroke-width="1.3" fill="none" stroke-linecap="round" stroke-linejoin="round"/><path d="M185 142.5 H200 M187 148.5 H190 M195 148.5 H198 M185 154.5 H200" stroke="#1f1f1f" stroke-width="1" fill="none" stroke-dasharray="1 1"/><path d="M185.5 142 V155 M192.5 144 V147 M192.5 150 V153 M199.5 142 V155" stroke="#1f1f1f" stroke-width="1" fill="none" stroke-dasharray="1 1"/><circle cx="192.5" cy="148.5" r="1.1" stroke="#1f1f1f" stroke-width="0.8"/><path d="M185 156.5 H200" stroke="#111" stroke-width="1.3" fill="none" /><path d="M209.00 149.50 L211.50 151.70 L214.00 149.50" stroke="#262626" stroke-width="1.25" fill="none" stroke-linecap="round" stroke-linejoin="round"/><path d="M236.9 143.3 L231.5 148.8 L236.3 153 L241.4 148.1 L238.9 145.6" stroke="#333" stroke-width="1.15" fill="none" stroke-linecap="round" stroke-linejoin="round"/><path d="M236.9 143.3 Q237.1 141.9 238 142 Q238.9 142.2 238.8 143.6 V147.4" stroke="#333" stroke-width="1.15" fill="none" stroke-linecap="round" stroke-linejoin="round"/><path d="M241.2 145.7 Q243.5 146.8 242.8 151.8" stroke="#1670c4" stroke-width="1.9" fill="none" stroke-linecap="round"/><rect x="229" y="154.2" width="16" height="3.8" fill="#cdd6ee"/><path d="M252.90 149.50 L255.40 151.70 L257.90 149.50" stroke="#262626" stroke-width="1.25" fill="none" stroke-linecap="round" stroke-linejoin="round"/><text x="273.6" y="152.6" font-family="Liberation Sans" font-size="14" fill="#4a4a4a" textLength="9.8" lengthAdjust="spacingAndGlyphs">A</text><rect x="270" y="154.2" width="16.2" height="3.8" fill="#e9111f"/><path d="M293.90 149.50 L296.40 151.70 L298.90 149.50" stroke="#262626" stroke-width="1.25" fill="none" stroke-linecap="round" stroke-linejoin="round"/><path d="M323.5 174.8 V168.5 H330" stroke="#1c1c1c" stroke-width="1" fill="none" /><path d="M326.2 171.2 L330.5 175.5 M330.5 171 V175.5 H326" stroke="#1c1c1c" stroke-width="1.1" fill="none" /><path d="M348 90.5 H362" stroke="#3b3b3b" stroke-width="1.15" fill="none" /><path d="M350.5 94.5 H359.5" stroke="#3b3b3b" stroke-width="1.15" fill="none" /><path d="M348 98.5 H362" stroke="#3b3b3b" stroke-width="1.15" fill="none" /><path d="M374 93.5 H388" stroke="#3b3b3b" stroke-width="1.15" fill="none" /><path d="M376.5 97.5 H385.5" stroke="#3b3b3b" stroke-width="1.15" fill="none" /><path d="M374 101.5 H388" stroke="#3b3b3b" stroke-width="1.15" fill="none" /><path d="M400 97.5 H414" stroke="#3b3b3b" stroke-width="1.15" fill="none" /><path d="M402.5 101.5 H411.5" stroke="#3b3b3b" stroke-width="1.15" fill="none" /><path d="M400 105.5 H414" stroke="#3b3b3b" stroke-width="1.15" fill="none" /><path d="M348 117.5 H362" stroke="#3b3b3b" stroke-width="1.15" fill="none" /><path d="M348 121.5 H357.8" stroke="#3b3b3b" stroke-width="1.15" fill="none" /><path d="M348 125.5 H362" stroke="#3b3b3b" stroke-width="1.15" fill="none" /><path d="M348 129.5 H357.8" stroke="#3b3b3b" stroke-width="1.15" fill="none" /><path d="M374 117.5 H388" stroke="#3b3b3b" stroke-width="1.15" fill="none" /><path d="M376.5 121.5 H385.4" stroke="#3b3b3b" stroke-width="1.15" fill="none" /><path d="M374 125.5 H388" stroke="#3b3b3b" stroke-width="1.15" fill="none" /><path d="M376.5 129.5 H385.4" stroke="#3b3b3b" stroke-width="1.15" fill="none" /><path d="M400 117.5 H414" stroke="#3b3b3b" stroke-width="1.15" fill="none" /><path d="M404.2 121.5 H414" stroke="#3b3b3b" stroke-width="1.15" fill="none" /><path d="M400 125.5 H414" stroke="#3b3b3b" stroke-width="1.15" fill="none" /><path d="M404.2 129.5 H414" stroke="#3b3b3b" stroke-width="1.15" fill="none" /><text x="427.2" y="97.9" font-family="Liberation Sans" font-size="10" fill="#4a4a4a" textLength="11.8" lengthAdjust="spacingAndGlyphs">ab</text><text x="427.3" y="105.3" font-family="Liberation Sans" font-size="10" fill="#4a4a4a">c</text><path d="M440.6 97.8 V100.4 Q440.6 102.6 438.2 102.6 H434.2 M436.8 99.8 L433.8 102.6 L436.8 105.4" stroke="#2b88d8" stroke-width="1.2" fill="none" stroke-linecap="round" stroke-linejoin="round"/><path d="M425.5 119.5 V116.5 H439.5 V119.5 M432.5 116.5 V119.5 M425.5 127.5 V130.5 H439.5 V127.5 M432.5 127.5 V130.5" stroke="#2b2b2b" stroke-width="1.1" fill="none" /><rect x="425.5" y="119.5" width="14" height="8" stroke="#2b88d8" stroke-width="1.1" fill="#fff"/><path d="M428 123.5 H437 M429.9 121.6 L428 123.5 L429.9 125.4 M435.1 121.6 L437 123.5 L435.1 125.4" stroke="#2b88d8" stroke-width="1.15" fill="none" stroke-linecap="round" stroke-linejoin="round"/><path d="M448.90 123.40 L451.40 125.60 L453.90 123.40" stroke="#262626" stroke-width="1.25" fill="none" stroke-linecap="round" stroke-linejoin="round"/><path d="M348 143.5 H362" stroke="#3b3b3b" stroke-width="1.15" fill="none" /><path d="M356.2 147.5 H362" stroke="#3b3b3b" stroke-width="1.15" fill="none" /><path d="M356.2 151.5 H362" stroke="#3b3b3b" stroke-width="1.15" fill="none" /><path d="M348 155.5 H362" stroke="#3b3b3b" stroke-width="1.15" fill="none" /><path d="M354.4 149.3 H348.4 M350.6 147 L348.3 149.3 L350.6 151.6" stroke="#2b88d8" stroke-width="1.2" fill="none" stroke-linecap="round" stroke-linejoin="round"/><path d="M374 143.5 H388" stroke="#3b3b3b" stroke-width="1.15" fill="none" /><path d="M382.6 147.5 H388" stroke="#3b3b3b" stroke-width="1.15" fill="none" /><path d="M382.6 151.5 H388" stroke="#3b3b3b" stroke-width="1.15" fill="none" /><path d="M374 155.5 H388" stroke="#3b3b3b" stroke-width="1.15" fill="none" /><path d="M374.2 149.3 H380.2 M378 147 L380.3 149.3 L378 151.6" stroke="#2b88d8" stroke-width="1.2" fill="none" stroke-linecap="round" stroke-linejoin="round"/><text x="0" y="0" transform="translate(403.2 153.8) rotate(-45)" font-family="Liberation Sans" font-size="11.2" fill="#444" textLength="12.6" lengthAdjust="spacingAndGlyphs">ab</text><path d="M407.4 156 L417.4 146.6 M414 146.4 H417.6 V150" stroke="#2b88d8" stroke-width="1.15" fill="none" stroke-linecap="round" stroke-linejoin="round"/><path d="M424.00 149.50 L426.50 151.70 L429.00 149.50" stroke="#262626" stroke-width="1.25" fill="none" stroke-linecap="round" stroke-linejoin="round"/><path d="M457.5 174.8 V168.5 H464" stroke="#1c1c1c" stroke-width="1" fill="none" /><path d="M460.2 171.2 L464.5 175.5 M464.5 171 V175.5 H460" stroke="#1c1c1c" stroke-width="1.1" fill="none" /><path d="M558.90 97.50 L561.40 99.70 L563.90 97.50" stroke="#262626" stroke-width="1.25" fill="none" stroke-linecap="round" stroke-linejoin="round"/><path d="M481.5 119.5 H496.5 V128.5 H481.5 Z" stroke="#2b2b2b" stroke-width="1.1" fill="none" /><path d="M485.4 121.6 H484 V126.6 H485.4 M489.2 122.2 Q487 121.2 487 124.1 Q487 127 489.2 126 M492.6 121.6 H494 V123" stroke="#2b2b2b" stroke-width="1" fill="none" /><path d="M489.3 125 V130 Q489.3 131.6 492.9 131.6 Q496.5 131.6 496.5 130 V125 Z" stroke="#e07010" stroke-width="1.1" fill="#fff" /><ellipse cx="492.9" cy="124.9" rx="3.6" ry="1.5" stroke="#e07010" stroke-width="1.1" fill="#fff"/><path d="M489.3 127.8 Q489.3 129.3 492.9 129.3 Q496.5 129.3 496.5 127.8" stroke="#e07010" stroke-width="1.1" fill="none" /><path d="M505.00 123.40 L507.50 125.60 L510.00 123.40" stroke="#262626" stroke-width="1.25" fill="none" stroke-linecap="round" stroke-linejoin="round"/><text x="522.4" y="130.6" font-family="Liberation Sans" font-size="18.6" font-weight="normal" fill="#444" textLength="15" lengthAdjust="spacingAndGlyphs">%</text><path d="M556.8 118.2 Q560.6 118.4 560.4 122.6 Q560 127.6 553.8 130.2 L553.4 129.6 Q557 127.4 557.4 124.6 Q553.4 125 553 121.6 Q553 118.4 556.8 118.2 Z" stroke="none" stroke-width="0" fill="#2b2b2b" /><path d="M489.8 146.5 H481.6 M485 143 L481.4 146.5 L485 150" stroke="#2b88d8" stroke-width="1.2" fill="none" stroke-linecap="round" stroke-linejoin="round"/><text x="489.4" y="148.4" font-family="Liberation Sans" font-size="8.8" font-weight="normal" fill="#444" textLength="6.8" lengthAdjust="spacingAndGlyphs">.0</text><text x="483.4" y="156.7" font-family="Liberation Sans" font-size="8.8" font-weight="normal" fill="#444" textLength="12.8" lengthAdjust="spacingAndGlyphs">.00</text><text x="509.4" y="148.4" font-family="Liberation Sans" font-size="8.8" font-weight="normal" fill="#444" textLength="12.8" lengthAdjust="spacingAndGlyphs">.00</text><path d="M507.2 153.5 H515.4 M512 150 L515.6 153.5 L512 157" stroke="#2b88d8" stroke-width="1.2" fill="none" stroke-linecap="round" stroke-linejoin="round"/><text x="515.2" y="156.7" font-family="Liberation Sans" font-size="8.8" font-weight="normal" fill="#444" textLength="6.8" lengthAdjust="spacingAndGlyphs">.0</text><path d="M564.5 174.8 V168.5 H571" stroke="#1c1c1c" stroke-width="1" fill="none" /><path d="M567.2 171.2 L571.5 175.5 M571.5 171 V175.5 H567" stroke="#1c1c1c" stroke-width="1.1" fill="none" /><path d="M588.5 91.5 H603.5 V104.5 H588.5 Z M588.5 95.5 H603.5 M588.5 100.5 H603.5 M591.5 91.5 V104.5 M600.5 91.5 V104.5" stroke="#4a4a4a" stroke-width="1" fill="none" /><rect x="592" y="96" width="8" height="4" fill="#fff"/><rect x="591.5" y="91.5" width="5.5" height="4" fill="#f4a3ab" stroke="#e3131d" stroke-width="1.1"/><rect x="591.5" y="96.2" width="3" height="3.8" fill="#7bb7ee" stroke="#0f6cbd" stroke-width="1.1"/><rect x="591.5" y="100.5" width="7.5" height="4" fill="#f4a3ab" stroke="#e3131d" stroke-width="1.1"/><path d="M736.10 97.50 L738.60 99.70 L741.10 97.50" stroke="#262626" stroke-width="1.25" fill="none" stroke-linecap="round" stroke-linejoin="round"/><path d="M588.5 117.5 H603.5 V130.5 H588.5 Z M588.5 121.5 H603.5 M588.5 126.5 H603.5 M593.5 117.5 V130.5 M598.5 117.5 V130.5" stroke="#4a4a4a" stroke-width="1" fill="none" /><rect x="593.5" y="121.5" width="10" height="9" fill="#8dbff0" stroke="#1b6ec2" stroke-width="1.1"/><path d="M603.8 121.4 L596.4 128.6" stroke="#fff" stroke-width="4" fill="none" stroke-linecap="round"/><path d="M603.9 121.3 L597.2 127.8" stroke="#3f3f3f" stroke-width="2.4" fill="none" stroke-linecap="round"/><path d="M603.6 121.6 L598.4 126.6" stroke="#d8d8d8" stroke-width="0.6" fill="none" stroke-linecap="round"/><path d="M596.6 126.2 Q599.2 128 598 130 Q595.4 132.6 590.6 131.4 Q593.2 130.6 593.8 128.6 Q594.6 126.2 596.6 126.2 Z" stroke="#1b6ec2" stroke-width="0.6" fill="#2b88d8" /><path d="M694.10 123.40 L696.60 125.60 L699.10 123.40" stroke="#262626" stroke-width="1.25" fill="none" stroke-linecap="round" stroke-linejoin="round"/><path d="M588.5 143.5 H603.5 V156.5 H588.5 Z M588.5 146.5 H603.5 M588.5 153.5 H603.5 M591.5 143.5 V156.5 M600.5 143.5 V156.5" stroke="#4a4a4a" stroke-width="1" fill="none" /><rect x="591.5" y="146.5" width="9" height="7" fill="#8dbff0" stroke="#1b6ec2" stroke-width="1.1"/><path d="M603.8 147.0 L596.4 154.2" stroke="#fff" stroke-width="4" fill="none" stroke-linecap="round"/><path d="M603.9 146.9 L597.2 153.4" stroke="#3f3f3f" stroke-width="2.4" fill="none" stroke-linecap="round"/><path d="M603.6 147.2 L598.4 152.2" stroke="#d8d8d8" stroke-width="0.6" fill="none" stroke-linecap="round"/><path d="M596.6 151.8 Q599.2 153.6 598 155.6 Q595.4 158.2 590.6 157.0 Q593.2 156.2 593.8 154.2 Q594.6 151.8 596.6 151.8 Z" stroke="#1b6ec2" stroke-width="0.6" fill="#2b88d8" /><path d="M665.10 149.50 L667.60 151.70 L670.10 149.50" stroke="#262626" stroke-width="1.25" fill="none" stroke-linecap="round" stroke-linejoin="round"/><path d="M772.5 95.5 V91.5 H787.5 V95.5 M772.5 100.5 V104.5 H787.5 V100.5 M777.5 91.5 V95.5 M782.5 91.5 V95.5 M777.5 100.5 V104.5 M782.5 100.5 V104.5" stroke="#333" stroke-width="1.1" fill="none" /><rect x="778.5" y="95.5" width="9.3" height="5" fill="#86bdee" stroke="#0f6cbd" stroke-width="1.1"/><path d="M782.5 95.5 V100.5" stroke="#0f6cbd" stroke-width="1.1" fill="none" /><path d="M778.8 98 H772.6 M775.4 94.8 L772.3 98 L775.4 101.2" stroke="#1e8fe0" stroke-width="1.5" fill="none" stroke-linecap="round" stroke-linejoin="round"/><path d="M834.10 97.50 L836.60 99.70 L839.10 97.50" stroke="#262626" stroke-width="1.25" fill="none" stroke-linecap="round" stroke-linejoin="round"/><path d="M772.5 121.5 V117.5 H787.5 V121.5 M777.5 117.5 V121.5 M782.5 117.5 V121.5 M772.5 121.5 H775 M782 121.5 H787.5" stroke="#333" stroke-width="1.1" fill="none" /><path d="M772.5 126.5 V130.5 H787.5 V126.5 M777.5 126.5 V130.5 M782.5 126.5 V130.5 M772.5 126.5 H775 M782 126.5 H787.5" stroke="#333" stroke-width="1.1" fill="none" /><rect x="775.5" y="121.5" width="5.5" height="5" fill="#8dbff0" stroke="#1b6ec2" stroke-width="1.1"/><path d="M782.8 121.6 L787.4 126.4 M787.4 121.6 L782.8 126.4" stroke="#ea4a55" stroke-width="1.2" fill="none" /><path d="M837.90 123.40 L840.40 125.60 L842.90 123.40" stroke="#262626" stroke-width="1.25" fill="none" stroke-linecap="round" stroke-linejoin="round"/><path d="M775.5 142.5 H784.5 M775.5 141 V144.2 M784.5 141 V144.2" stroke="#2b88d8" stroke-width="1.1" fill="none" /><path d="M774.4 145.5 H772.5 V157.5 H787.5 V145.5 H785.6 M772.5 148.5 H787.5 M772.5 153.5 H787.5 M777.5 146 V157.5 M782.5 146 V157.5" stroke="#333" stroke-width="1.1" fill="none" /><rect x="776.5" y="148.5" width="7" height="5" fill="#8dbff0" stroke="#1b6ec2" stroke-width="1.1"/><path d="M834.10 149.50 L836.60 151.70 L839.10 149.50" stroke="#262626" stroke-width="1.25" fill="none" stroke-linecap="round" stroke-linejoin="round"/><path d="M884 92.6 V91.6 H872.6 L879.6 98 L872.6 104.5 H884 V103.5" stroke="#333" stroke-width="1.1" fill="none" stroke-linejoin="miter"/><path d="M894.00 97.50 L896.50 99.70 L899.00 97.50" stroke="#262626" stroke-width="1.25" fill="none" stroke-linecap="round" stroke-linejoin="round"/><text x="911.8" y="96.4" font-family="Liberation Sans" font-size="9" font-weight="bold" fill="#2b88d8" textLength="6.4" lengthAdjust="spacingAndGlyphs">A</text><text x="912" y="105.5" font-family="Liberation Sans" font-size="9" font-weight="bold" fill="#333" textLength="6" lengthAdjust="spacingAndGlyphs">Z</text><path d="M919.6 94.6 H927.4 L924.6 98.2 V102 H922.4 V98.2 Z" stroke="#333" stroke-width="1.1" fill="none" stroke-linejoin="round"/><path d="M934.30 97.50 L936.80 99.70 L939.30 97.50" stroke="#262626" stroke-width="1.25" fill="none" stroke-linecap="round" stroke-linejoin="round"/><path d="M870.5 117.5 H885.5 V130.5 H870.5 Z M870.5 119.5 H885.5" stroke="#2b2b2b" stroke-width="1.1" fill="none" /><path d="M877.5 121.4 V128.4 M874.7 125.8 L877.5 128.6 L880.3 125.8" stroke="#2b88d8" stroke-width="1.2" fill="none" stroke-linecap="round" stroke-linejoin="round"/><path d="M892.10 123.40 L894.60 125.60 L897.10 123.40" stroke="#262626" stroke-width="1.25" fill="none" stroke-linecap="round" stroke-linejoin="round"/><circle cx="922.2" cy="121.3" r="4.8" stroke="#333" stroke-width="1.1"/><path d="M918.7 124.8 L913.2 130.8" stroke="#333" stroke-width="1.2" fill="none" stroke-linecap="round"/><path d="M934.30 123.40 L936.80 125.60 L939.30 123.40" stroke="#262626" stroke-width="1.25" fill="none" stroke-linecap="round" stroke-linejoin="round"/><path d="M870.6 151.2 L880.2 142.8 L885.2 148.2 L875.8 156.8 Z" stroke="#b146c2" stroke-width="1.3" fill="#fff" stroke-linejoin="round"/><path d="M870.6 151.2 L875 147.3 L880.2 152.7 L875.8 156.8 Z" stroke="#b146c2" stroke-width="1.3" fill="#dba2e3" stroke-linejoin="round"/><path d="M892.10 149.40 L894.60 151.60 L897.10 149.40" stroke="#262626" stroke-width="1.25" fill="none" stroke-linecap="round" stroke-linejoin="round"/><rect x="972" y="90" width="30" height="4" fill="#b9b9b9"/><path d="M972 94.5 H1002 M972 102.5 H1002 M972 111.5 H1002 M982.5 94.5 V120 M992.5 94.5 V120" stroke="#a8a8a8" stroke-width="1.1" fill="none" /><path d="M971.5 89.5 H1002.5 V120.5 H971.5 Z" stroke="#333" stroke-width="1.2" fill="none" /><circle cx="986" cy="101.9" r="9.6" stroke="#333" stroke-width="1.2" fill="#fff"/><path d="M993 108.9 L1002.4 120" stroke="#333" stroke-width="1.4" fill="none" /><rect x="981" y="100.2" width="3" height="6.4" fill="#b5b5b5"/><rect x="984" y="96.4" width="3.8" height="10.2" fill="#fff" stroke="#444" stroke-width="1"/><rect x="988.2" y="98.2" width="3.4" height="8.6" fill="#6cb0ea" stroke="#1f7bd0" stroke-width="0.8"/><path d="M1101 166.6 L1105.6 171 L1110.2 166.6" stroke="#333" stroke-width="1.2" fill="none" stroke-linecap="round" stroke-linejoin="round"/><path d="M99 202.2 L103.8 206.8 L108.6 202.2" stroke="#333" stroke-width="1.1" fill="none" stroke-linecap="round" stroke-linejoin="round"/><path d="M142.2 197.4 L153.6 208.8 M153.6 197.4 L142.2 208.8" stroke="#b8b8b8" stroke-width="1.1" fill="none" /><path d="M164.2 202.6 L169.4 207.7 L179.8 197.3" stroke="#b8b8b8" stroke-width="1.1" fill="none" /><text x="188.8" y="207.8" font-family="Liberation Serif" font-style="italic" font-size="16.6" fill="#2b2b2b" textLength="14.4" lengthAdjust="spacingAndGlyphs">fx</text><path d="M1106 199.6 L1110.4 204 L1114.8 199.6" stroke="#333" stroke-width="1.1" fill="none" stroke-linecap="round" stroke-linejoin="round"/><path d="M1112.8 234.4 L1117.4 228.4 L1122 234.4 Z" stroke="none" stroke-width="0" fill="#737373" /><path d="M1112.8 417.4 L1117.4 423.8 L1122 417.4 Z" stroke="none" stroke-width="0" fill="#737373" /><path d="M706 436.4 V445 L699.4 440.7 Z" stroke="none" stroke-width="0" fill="#737373" /><path d="M1094 436.2 V445.2 L1101 440.7 Z" stroke="none" stroke-width="0" fill="#737373" /><path d="M36.8 436.6 V444.4 L32.2 440.5 Z" stroke="none" stroke-width="0" fill="#c2c2c2" /><path d="M60.6 436.6 V444.4 L65.2 440.5 Z" stroke="none" stroke-width="0" fill="#c2c2c2" /><circle cx="282" cy="440.6" r="7.6" stroke="#6a6a6a" stroke-width="1.1"/><path d="M277.8 440.6 H286.2 M282 436.4 V444.8" stroke="#6a6a6a" stroke-width="1.3" fill="none" /><circle cx="68.9" cy="461.1" r="1.8" stroke="#333" stroke-width="1"/><path d="M66.6 463.6 Q63.6 464.4 63.3 462.4 Q63.4 461 65.4 461.6 Q68.9 464.6 72.4 461.6 Q74.4 461 74.5 462.4 Q74.2 464.4 71.3 463.6 V467.4" stroke="#333" stroke-width="1" fill="none" stroke-linecap="round" stroke-linejoin="round"/><path d="M66.6 463.6 Q66.8 468 65.2 470.6 Q64.8 472.4 67 472.3" stroke="#333" stroke-width="1" fill="none" stroke-linecap="round" stroke-linejoin="round"/><path d="M69.4 469.4 L72.5 472.4 L77.4 467.3" stroke="#333" stroke-width="1" fill="none" stroke-linecap="round" stroke-linejoin="round"/><path d="M830.5 459.5 H842.5 V471.5 H830.5 Z M830.5 463.5 H842.5 M830.5 467.5 H842.5 M834.5 459.5 V471.5 M838.5 459.5 V471.5" stroke="#2b2b2b" stroke-width="1.25" fill="none" /><path d="M870.5 459.5 H883.5 V471.5 H870.5 Z" stroke="#2b2b2b" stroke-width="1.2" fill="none" /><path d="M873.5 461.5 H880.5 V469.5 H873.5 Z M875.5 463.5 H878.5 M875.5 465.5 H878.5 M875.5 467.5 H878.5" stroke="#2b2b2b" stroke-width="1" fill="none" /><path d="M910.5 459.5 H923.5 V471.5 H910.5 Z M914.5 459.5 V466.5 M918.5 459.5 V466.5 M910.5 466.5 H918.5" stroke="#2b2b2b" stroke-width="1.2" fill="none" /><path d="M943.2 465.6 H950.6" stroke="#444" stroke-width="1.2" fill="none" /><path d="M1061 465.6 H1068.6 M1064.8 461.8 V469.4" stroke="#444" stroke-width="1.1" fill="none" /></svg>
</body></html>
